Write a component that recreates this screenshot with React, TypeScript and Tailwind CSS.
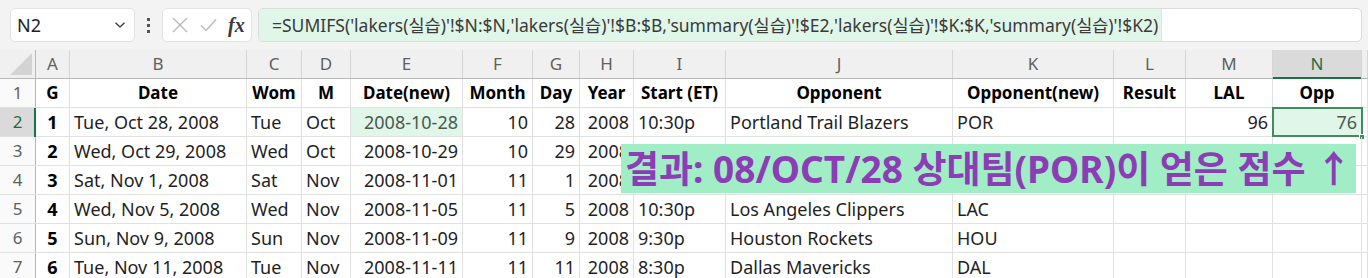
import React from "react";

const COLS = ["A","B","C","D","E","F","G","H","I","J","K","L","M","N",""];
type Align = "l" | "c" | "r";
const ALIGN: Align[] = ["c","l","l","l","r","r","r","r","l","l","l","l","r","r","l"];

const HEAD = ["G","Date","Wom","M","Date(new)","Month","Day","Year","Start (ET)","Opponent","Opponent(new)","Result","LAL","Opp",""];

const ROWS: string[][] = [
  ["1","Tue, Oct 28, 2008","Tue","Oct","2008-10-28","10","28","2008","10:30p","Portland Trail Blazers","POR","","96","76",""],
  ["2","Wed, Oct 29, 2008","Wed","Oct","2008-10-29","10","29","2008","","","","","","",""],
  ["3","Sat, Nov 1, 2008","Sat","Nov","2008-11-01","11","1","2008","","","","","","",""],
  ["4","Wed, Nov 5, 2008","Wed","Nov","2008-11-05","11","5","2008","10:30p","Los Angeles Clippers","LAC","","","",""],
  ["5","Sun, Nov 9, 2008","Sun","Nov","2008-11-09","11","9","2008","9:30p","Houston Rockets","HOU","","","",""],
  ["6","Tue, Nov 11, 2008","Tue","Nov","2008-11-11","11","11","2008","8:30p","Dallas Mavericks","DAL","","","",""],
];

const font = { fontFamily: '"Noto Sans", "Noto Sans CJK KR", sans-serif' };
const GRID = "grid grid-cols-[36px_34px_177px_55px_49px_112px_70px_47px_54px_92px_227px_161px_72px_87px_89px_1fr]";

function alignCls(a: Align) {
  return a === "c" ? "justify-center" : a === "r" ? "justify-end pr-[4px]" : "justify-start pl-[4px]";
}

export default function App() {
  return (
    <div className="w-[1368px] h-[278px] overflow-hidden bg-white text-[#1f1f1f]" style={font}>
      {/* toolbar */}
      <div className="h-[50px] bg-[#f3f3f3] flex items-start pt-[8px] pl-[10px] pr-[6px] gap-0">
        <div className="w-[125px] h-[34px] bg-white border border-[#e3e3e3] rounded-[5px] flex items-center pl-[6px] pr-[8px] justify-between">
          <span className="text-[18px] text-[#222]">N2</span>
          <svg width="12" height="8" viewBox="0 0 12 8"><path d="M1.5 1.8 L6 6 L10.5 1.8" fill="none" stroke="#444" strokeWidth="1.5" /></svg>
        </div>
        <div className="w-[27px] h-[34px] flex flex-col items-center justify-center gap-[3px]">
          <div className="w-[3px] h-[3px] bg-[#555]" />
          <div className="w-[3px] h-[3px] bg-[#555]" />
          <div className="w-[3px] h-[3px] bg-[#555]" />
        </div>
        <div className="w-[90px] h-[34px] bg-white border border-[#e3e3e3] rounded-[5px] flex items-center pl-[9px] pr-[4px]">
          <svg width="16" height="16" viewBox="0 0 16 16"><path d="M1 1 L15 15 M15 1 L1 15" stroke="#b9b9b9" strokeWidth="1.4" fill="none" /></svg>
          <svg className="ml-[12px]" width="17" height="14" viewBox="0 0 17 14"><path d="M1 7.5 L6 12.5 L16 1.5" stroke="#b9b9b9" strokeWidth="1.4" fill="none" /></svg>
          <span className="ml-[11px] text-[20px] italic font-bold text-[#3a3a3a] leading-none" style={{ fontFamily: '"Liberation Serif", serif' }}>fx</span>
        </div>
        <div className="ml-[6px] flex-1 h-[34px] bg-white border border-[#dcdcdc] rounded-[5px] flex items-stretch overflow-hidden">
          <div className="w-[903px] bg-[#dff6e8] border-r border-[#cdeed9] flex items-center pl-[13px] text-[17.5px] text-[#3a3a3a] whitespace-nowrap overflow-hidden">
            =SUMIFS('lakers(실습)'!$N:$N,'lakers(실습)'!$B:$B,'summary(실습)'!$E2,'lakers(실습)'!$K:$K,'summary(실습)'!$K2)
          </div>
        </div>
      </div>

      {/* grid */}
      <div className="relative">
        {/* column header */}
        <div className={`${GRID} h-[29px] bg-[#f0f0f0] border-b border-[#b8b8b8]`}>
          <div className="relative border-r border-[#b8b8b8]">
            <svg className="absolute right-[3px] bottom-[3px]" width="22" height="22" viewBox="0 0 22 22"><polygon points="22,0 22,22 0,22" fill="#d3d3d3" /></svg>
          </div>
          {COLS.map((c, i) =>
            c === "N" ? (
              <div key={i} className="relative bg-[#dadada] border-r border-[#d6d6d6] flex items-center justify-center text-[17px] text-[#1f6e43]">
                N
                <div className="absolute left-0 right-0 bottom-[-1px] h-[2px] bg-[#1e7145]" />
              </div>
            ) : (
              <div key={i} className="border-r border-[#d6d6d6] flex items-center justify-center text-[17px] text-[#5f5f5f]">{c}</div>
            )
          )}
        </div>
        {/* row 1 */}
        <div className={`${GRID} h-[29px] border-b border-[#e1e1e1]`}>
          <div className="bg-[#fafafa] border-r border-[#b8b8b8] flex items-center justify-center text-[17px] text-[#5f5f5f]">1</div>
          {HEAD.map((h, i) => (
            <div key={i} className="border-r border-[#e1e1e1] flex items-center justify-center font-bold text-[17px] text-black whitespace-nowrap overflow-hidden">{h}</div>
          ))}
        </div>
        {ROWS.map((r, ri) => {
          const rowNum = ri + 2;
          const sel = rowNum === 2;
          return (
            <div key={ri} className={`${GRID} h-[29px] border-b border-[#e1e1e1]`}>
              <div className={`relative border-r ${sel ? "bg-[#dadada] text-[#1f6e43] border-[#b8b8b8]" : "bg-[#fafafa] text-[#5f5f5f] border-[#b8b8b8]"} flex items-center justify-center text-[17px]`}>
                {rowNum}
                {sel && <div className="absolute top-0 bottom-[-1px] right-[-1px] w-[2px] bg-[#1e7145]" />}
              </div>
              {r.map((v, ci) => {
                const isE2 = sel && ci === 4;
                const isN2 = sel && ci === 13;
                return (
                  <div
                    key={ci}
                    className={`relative border-r border-[#e1e1e1] flex items-center whitespace-nowrap text-[18px] ${alignCls(ALIGN[ci])} ${ci === 0 ? "font-bold text-black" : ""} ${isE2 ? "bg-[#dff6e8] text-[#4a5a50]" : ""} ${isN2 ? "bg-[#dff6e8] text-[#4a5a50] outline-2 outline-[#3f8d5f] outline-offset-[-1px]" : ""}`}
                  >
                    {v}
                    {isN2 && <div className="absolute right-[-4px] bottom-[-4px] w-[6px] h-[6px] bg-[#3f8d5f] border border-white" />}
                  </div>
                );
              })}
            </div>
          );
        })}

        {/* annotation overlay */}
        <div className="absolute left-[621px] top-[94px] w-[735px] h-[49px] bg-[#a0edc6] flex items-center pl-[4px] whitespace-nowrap overflow-hidden">
          <span className="text-[37px] font-bold text-[#8c3db5] leading-none">
            결과: 08/OCT/28 상대팀(POR)이 얻은 점수 ↑
          </span>
        </div>
      </div>
    </div>
  );
}
